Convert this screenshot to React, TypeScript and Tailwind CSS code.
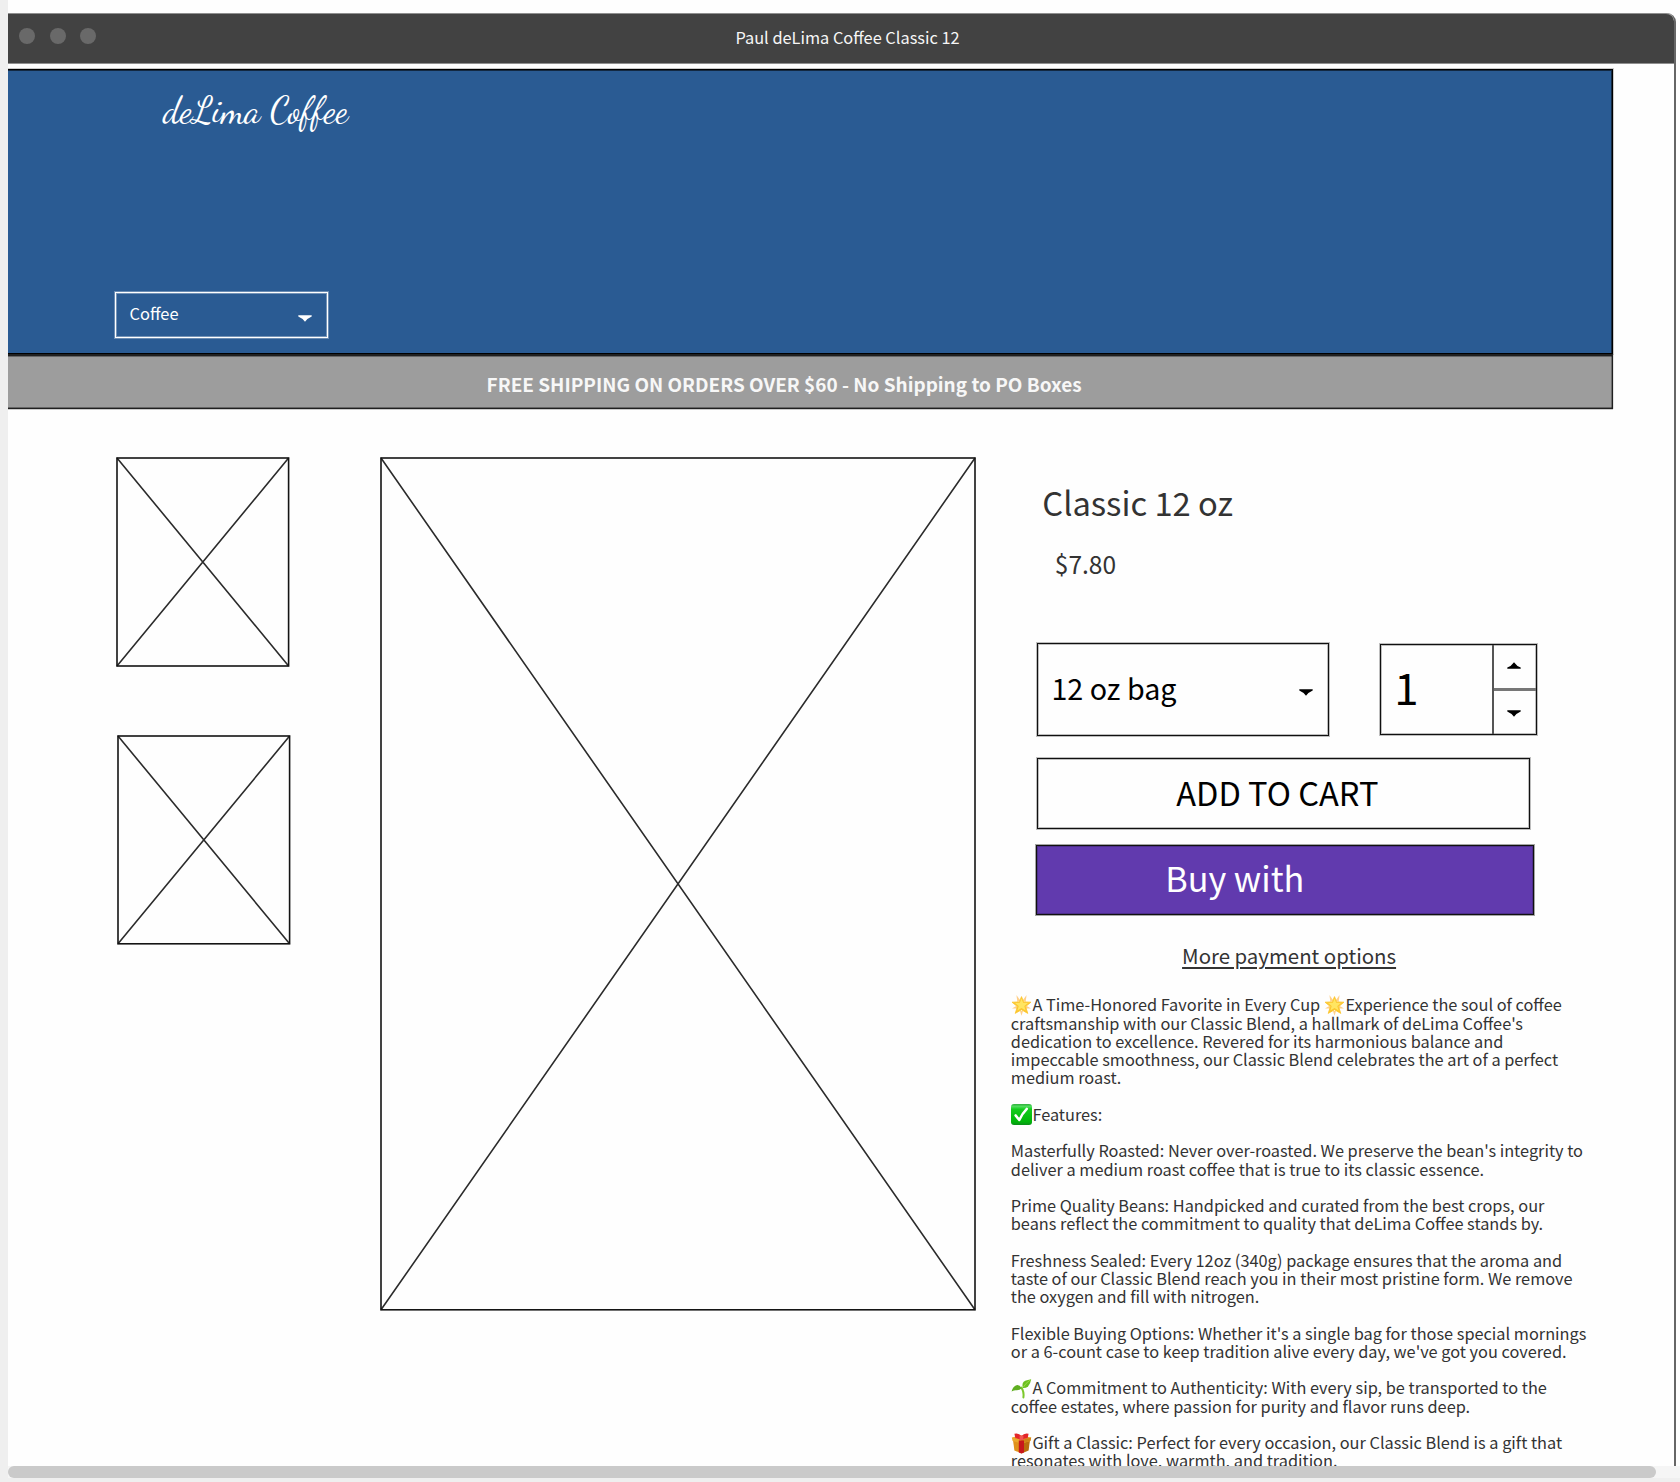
import React from 'react';

const softLine = 'border border-[#101010] shadow-[0_0_0_1px_rgba(0,0,0,0.25),inset_0_0_0_1px_rgba(0,0,0,0.25)]';

function Placeholder({ w, h, className }: { w: number; h: number; className: string }) {
  return (
    <svg
      width={w}
      height={h}
      viewBox={`0 0 ${w} ${h}`}
      className={`block shrink-0 overflow-visible ${className}`}
      fill="none"
      stroke="#141414"
      strokeWidth="1.6"
    >
      <rect x="0" y="0" width={w} height={h} />
      <path d={`M0 0L${w} ${h}M${w} 0L0 ${h}`} strokeOpacity="0.9" />
    </svg>
  );
}

function Arrow({ up = false, className = '' }: { up?: boolean; className?: string }) {
  return (
    <svg width="14" height="7" viewBox="0 0 14 7" fill="currentColor" className={`block shrink-0 ${className}`}>
      <path d={up ? 'M0.3 6.8V5.6Q4 4.4 7 0.2Q10 4.4 13.7 5.6V6.8Z' : 'M0.3 0.2H13.7V1.4Q10 2.8 7 6.8Q4 2.8 0.3 1.4Z'} />
    </svg>
  );
}

function Emoji({ label, children }: { label: string; children: React.ReactNode }) {
  return (
    <span className="inline-flex h-[18px] w-[21.6px] items-center overflow-visible align-top leading-none">
      <svg width="21" height="21" viewBox="0 0 21 21" className="mt-[2px] block shrink-0" role="img" aria-label={label}>
        {children}
      </svg>
    </span>
  );
}

function Star() {
  return (
    <Emoji label="🌟">
      <g fill="#ffd08a">
        <path d="M5.4 0L9.4 5.5L6.4 7Z" />
        <path d="M15.6 0L11.6 5.5L14.6 7Z" />
        <path d="M1 13.4L5.6 10.8L6.4 13.4Z" />
        <path d="M20 13.4L15.4 10.8L14.6 13.4Z" />
        <path d="M10.5 20.8L9 16H12Z" />
      </g>
      <path
        d="M10.5 1.6L12.7 6.9L20 7.2L14.6 11.6L16.8 18.4L10.5 14.8L4.2 18.4L6.4 11.6L1 7.2L8.3 6.9Z"
        fill="#fcc62f"
        stroke="#fcc62f"
        strokeWidth="0.8"
        strokeLinejoin="round"
      />
      <path d="M10.5 3.6L12.1 7.8L17 8L13.3 11.1L14.6 15.4L10.5 13L6.4 15.4L7.7 11.1L4 8L8.9 7.8Z" fill="#ffe562" />
    </Emoji>
  );
}

function Check() {
  return (
    <Emoji label="✅">
      <defs>
        <linearGradient id="check" x1="0" y1="0" x2="0" y2="1">
          <stop offset="0" stopColor="#2fae3c" />
          <stop offset="0.12" stopColor="#4fdc5c" />
          <stop offset="0.25" stopColor="#12cc1c" />
          <stop offset="0.85" stopColor="#00b50a" />
          <stop offset="1" stopColor="#0b8f1a" />
        </linearGradient>
      </defs>
      <rect width="21" height="21" rx="3" fill="url(#check)" />
      <path
        d="M4.6 11.4L8.3 16Q11.2 9.4 15.8 4.8"
        fill="none"
        stroke="#fff"
        strokeWidth="2.5"
        strokeLinecap="round"
        strokeLinejoin="round"
      />
    </Emoji>
  );
}

function Sprout() {
  return (
    <Emoji label="🌱">
      <path d="M12.4 19.4Q13.2 13.6 10.4 9.6" fill="none" stroke="#7cc82c" strokeWidth="2" strokeLinecap="round" />
      <path d="M10.6 10.2Q8.4 6.2 4.8 7.4Q1.6 8.8 0.6 13.6Q3.2 12 5.4 12.2Q8.6 12.4 10.6 10.2Z" fill="#5fae20" />
      <path d="M11.6 10Q10.6 4.4 14.2 2.8Q16.6 1.8 20.2 1.2Q19.4 6 17.2 8.2Q14.8 10.4 11.6 10Z" fill="#6dbf22" />
      <path d="M12.4 9Q14.4 5.4 19.4 1.8" fill="none" stroke="#a5e04e" strokeWidth="0.8" />
    </Emoji>
  );
}

function Gift() {
  return (
    <Emoji label="🎁">
      <path d="M2 7L10.5 9.6V20.4L3.4 17.4Z" fill="#e0921c" />
      <path d="M19 7L10.5 9.6V20.4L17.6 17.4Z" fill="#b96c0d" />
      <path d="M0.8 4.4L10.5 2.4L20.2 4.4L19.4 8L10.5 10.4L1.6 8Z" fill="#eba92d" />
      <path d="M10.5 7V10.4L19.4 8L20.2 4.4Z" fill="#cf8317" />
      <path d="M7.8 7.6H13V19.4L10.5 20.4L7.8 19.4Z" fill="#c8171c" />
      <path d="M3.4 0.8Q7.6 -0.4 10.5 3Q13.4 -0.4 17.6 0.8L16.6 5.2Q13.2 5 10.5 7.6Q7.8 5 4.4 5.2Z" fill="#e3262a" />
      <path d="M8.6 2.6H12.4V7H8.6Z" fill="#f2564f" />
    </Emoji>
  );
}

const description: React.ReactNode[] = [
  <><Star />A Time-Honored Favorite in Every Cup <Star />Experience the soul of coffee</>,
  "craftsmanship with our Classic Blend, a hallmark of deLima Coffee's",
  'dedication to excellence. Revered for its harmonious balance and',
  'impeccable smoothness, our Classic Blend celebrates the art of a perfect',
  'medium roast.',
  '',
  <><Check />Features:</>,
  '',
  "Masterfully Roasted: Never over-roasted. We preserve the bean's integrity to",
  'deliver a medium roast coffee that is true to its classic essence.',
  '',
  'Prime Quality Beans: Handpicked and curated from the best crops, our',
  'beans reflect the commitment to quality that deLima Coffee stands by.',
  '',
  'Freshness Sealed: Every 12oz (340g) package ensures that the aroma and',
  'taste of our Classic Blend reach you in their most pristine form. We remove',
  'the oxygen and fill with nitrogen.',
  '',
  "Flexible Buying Options: Whether it's a single bag for those special mornings",
  "or a 6-count case to keep tradition alive every day, we've got you covered.",
  '',
  <><Sprout />A Commitment to Authenticity: With every sip, be transported to the</>,
  'coffee estates, where passion for purity and flavor runs deep.',
  '',
  <><Gift />Gift a Classic: Perfect for every occasion, our Classic Blend is a gift that</>,
  'resonates with love, warmth, and tradition.',
];

function TitleBar() {
  return (
    <div className="flex h-[51px] shrink-0 items-start rounded-tr-[8px] border-y border-[#8f8f8f] bg-[#424242]">
      <div className="flex gap-[14.5px] pt-[14px] pl-[11px]">
        <i className="size-4 rounded-full bg-[#696969]" />
        <i className="size-4 rounded-full bg-[#696969]" />
        <i className="size-4 rounded-full bg-[#696969]" />
      </div>
      <h1 className="ml-[639.4px] text-[16.35px] leading-[46px] text-[#f6f6f6]">Paul deLima Coffee Classic 12</h1>
    </div>
  );
}

function Header() {
  return (
    <header className="mt-[5px] flex h-[285px] w-[1605px] shrink-0 flex-col items-start border-y border-r border-black bg-[#2a5b93] shadow-[0_0_0_1px_rgba(0,0,0,0.2),inset_-1px_1px_0_0_rgba(0,0,0,0.55)]">
      <div className="mt-[16px] ml-[155px] font-['Dancing_Script',cursive] text-[36.4px] leading-[50px] text-white">deLima Coffee</div>
      <div className="mt-[156px] ml-[107px] flex h-[46px] w-[213px] items-start justify-between border border-white pr-[15.5px] pl-[13.6px] text-white shadow-[0_0_0_1px_rgba(255,255,255,0.3),inset_0_0_0_1px_rgba(255,255,255,0.35)]">
        <span className="text-[16.4px] leading-[41px]">Coffee</span>
        <Arrow className="mt-[22px]" />
      </div>
    </header>
  );
}

function Banner() {
  return (
    <div className="h-[55px] w-[1605px] shrink-0 border-t-2 border-r border-b border-[#202020] bg-[#9d9d9d] pl-[478.6px] text-[18.98px] leading-[56px] font-bold text-[#f7f7f7] shadow-[0_1px_0_0_rgba(0,0,0,0.2),1px_0_0_0_rgba(0,0,0,0.1),inset_-1px_0_0_0_rgba(0,0,0,0.3),inset_0_1px_0_0_rgba(0,0,0,0.35),inset_0_-1px_0_0_rgba(0,0,0,0.35)]">
      FREE SHIPPING ON ORDERS OVER $60 - No Shipping to PO Boxes
    </div>
  );
}

function ProductPanel() {
  return (
    <section className="ml-[35.9px] flex shrink-0 flex-col items-start text-[#333]">
      <h2 className="mt-[73px] ml-[31.5px] text-[32.7px] leading-[40px]">Classic 12 oz</h2>
      <p className="mt-[27px] ml-[44px] text-[24.5px] leading-[30px]">$7.80</p>
      <div className="mt-[64px] ml-[26px] flex items-start text-black">
        <div className={`flex h-[93px] w-[292px] items-start justify-between pr-[15px] pl-[13.6px] ${softLine}`}>
          <span className="text-[28.7px] leading-[87px]">12 oz bag</span>
          <Arrow className="mt-[45px]" />
        </div>
        <div className={`mt-px ml-[51px] flex h-[91px] w-[157px] ${softLine}`}>
          <span className="flex-1 pl-[13.5px] text-[43.8px] leading-[82px]">1</span>
          <div className="flex w-[44px] flex-col border-l-2 border-[#555]">
            <div className="flex h-[43px] justify-center pt-[17px] pr-px"><Arrow up /></div>
            <div className="flex flex-1 justify-center border-t-3 border-[#777] pt-[19px] pr-px"><Arrow /></div>
          </div>
        </div>
      </div>
      <button className={`mt-[22px] ml-[26px] flex h-[71px] w-[493px] items-start pl-[138.4px] text-[32.6px] leading-[66px] text-black ${softLine}`}>
        ADD TO CART
      </button>
      <button className="mt-[16px] ml-[25px] flex h-[70px] w-[498px] items-start border border-[#111] bg-[#613aae] pl-[128.4px] text-[34.2px] leading-[63px] text-white shadow-[0_0_0_1px_rgba(0,0,0,0.35),inset_0_0_0_1px_rgba(0,0,0,0.2)]">
        Buy with
      </button>
      <a className="mt-[25px] ml-[171.3px] text-[20.4px] leading-[30px] underline decoration-2 underline-offset-[3px]">More payment options</a>
      <div className="mt-[25.48px] text-[16.32px] leading-[18.235px] whitespace-nowrap">
        {description.map((line, i) => (
          <div key={i} className="h-[18.235px]">{line}</div>
        ))}
      </div>
    </section>
  );
}

export default function App() {
  return (
    <div className="flex h-[1482px] w-[1680px] flex-col overflow-hidden bg-[#efefef] pl-2 font-['Noto_Sans_CJK_SC','Noto_Sans',sans-serif]">
      <div className="h-[1466px] shrink-0 overflow-hidden bg-[#fefefe] pt-[13px]">
        <div className="flex h-[1600px] w-[1668px] flex-col rounded-tr-[9px] border-r-2 border-[#666]">
          <TitleBar />
          <Header />
          <Banner />
          <main className="flex items-start">
            <div className="flex shrink-0 flex-col pl-[108.8px]">
              <Placeholder w={171.6} h={208} className="mt-[48.6px]" />
              <Placeholder w={171.6} h={207.8} className="mt-[70.2px] ml-[1.5px]" />
            </div>
            <Placeholder w={594} h={851.8} className="mt-[48.6px] ml-[91px]" />
            <ProductPanel />
          </main>
        </div>
      </div>
      <div className="h-3 shrink-0 bg-[#f5f5f5]">
        <div className="h-3 w-[1648px] rounded-full bg-[#cacaca]" />
      </div>
    </div>
  );
}
